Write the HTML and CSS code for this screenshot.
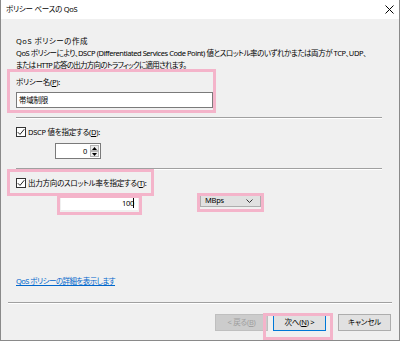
FILE: index.html
```html
<!DOCTYPE html>
<html lang="ja">
<head>
<meta charset="utf-8">
<link rel="stylesheet" href="styles.css">
</head>
<body>
<div class="window">
  <div class="titlebar">
    <span class="title">ポリシー ベースの QoS</span>
    <svg class="close" width="9" height="9" viewBox="0 0 9 9"><path d="M0.5 0.5L8.5 8.5M8.5 0.5L0.5 8.5" stroke="#000" stroke-width="1"/></svg>
  </div>
  <div class="body">
    <div class="heading">QoS ポリシーの作成</div>
    <div class="desc">
      <div class="desc-line">QoS ポリシーにより、DSCP (Differentiated Services Code Point) 値とスロットル率のいずれかまたは両方が TCP、UDP、</div>
      <div class="desc-line second">または HTTP 応答の出力方向のトラフィックに適用されます。</div>
    </div>
    <div class="label">ポリシー名(<u>P</u>):</div>
    <div class="textbox name">帯域制限</div>
    <div class="sep"></div>
    <div class="check-row">
      <span class="checkbox"><svg width="8" height="8" viewBox="0 0 8 8"><path d="M0.8 4.2L3 6.4L7.3 1.2" fill="none" stroke="#222" stroke-width="1"/></svg></span>
      <span>DSCP 値を指定する(<u>D</u>):</span>
    </div>
    <div class="spin">
      <div class="spin-field">0</div>
      <div class="spin-btns">
        <span class="spin-btn"><svg width="5" height="3" viewBox="0 0 5 3"><path d="M2.5 0L5 3H0Z" fill="#000"/></svg></span>
        <span class="spin-btn"><svg width="5" height="3" viewBox="0 0 5 3"><path d="M0 0H5L2.5 3Z" fill="#000"/></svg></span>
      </div>
    </div>
    <div class="sep"></div>
    <div class="check-row">
      <span class="checkbox"><svg width="8" height="8" viewBox="0 0 8 8"><path d="M0.8 4.2L3 6.4L7.3 1.2" fill="none" stroke="#222" stroke-width="1"/></svg></span>
      <span>出力方向のスロットル率を指定する(<u>T</u>):</span>
    </div>
    <div class="rate-row">
      <div class="textbox rate">100<span class="caret"></span></div>
      <div class="select"><span>MBps</span><svg width="7" height="4" viewBox="0 0 7 4"><path d="M0.5 0.5L3.5 3.5L6.5 0.5" fill="none" stroke="#333" stroke-width="1"/></svg></div>
    </div>
    <div class="link">QoS ポリシーの詳細を表示します</div>
  </div>
  <div class="footer-sep"></div>
  <div class="buttons">
    <div class="btn disabled">&lt; 戻る(<u>B</u>)</div>
    <div class="btn default">次へ(<u>N</u>) &gt;</div>
    <div class="btn cancel">キャンセル</div>
  </div>
  <div class="hl hl-name"></div>
  <div class="hl hl-check"></div>
  <div class="hl hl-rate"></div>
  <div class="hl hl-unit"></div>
  <div class="hl hl-next"></div>
</div>
</body>
</html>
```
FILE: styles.css
```css
html, body {
  margin: 0;
  padding: 0;
}
body {
  width: 400px;
  height: 341px;
  overflow: hidden;
  font-family: "Noto Sans", "Noto Sans CJK JP", sans-serif;
  font-size: 7.5px;
  letter-spacing: -0.25px;
  font-feature-settings: "palt";
  color: #000;
  background: #f0f0f0;
}
.window {
  position: relative;
  width: 400px;
  height: 341px;
  box-sizing: border-box;
  border: 1px solid #8a8a8a;
  border-top: none;
  background: #f0f0f0;
}
.titlebar {
  height: 19px;
  background: #fff;
  display: flex;
  align-items: center;
  justify-content: space-between;
  padding: 0 5px 0 5px;
}
.title {
  line-height: 19px;
}
.close {
  display: block;
}
.body {
  padding: 16px 0 0 15px;
}
.heading {
  line-height: 12px;
  height: 12px;
  letter-spacing: 0.5px;
}
.desc-line {
  line-height: 12px;
  white-space: nowrap;
  letter-spacing: -0.45px;
}
.desc-line.second {
  letter-spacing: -0.75px;
}
.label {
  margin-top: 5px;
  line-height: 12px;
}
.textbox {
  box-sizing: border-box;
  background: #fff;
  border: 1px solid #7a7a7a;
}
.name {
  margin-top: 4px;
  width: 197px;
  height: 16px;
  line-height: 14px;
  padding-left: 2px;
}
.sep {
  margin-top: 9px;
  width: 366px;
  height: 0;
  border-top: 1px solid #a0a0a0;
  border-bottom: 1px solid #fff;
}
.check-row {
  margin-top: 7px;
  display: flex;
  align-items: center;
  gap: 2px;
  line-height: 12px;
  height: 12px;
}
.checkbox {
  box-sizing: border-box;
  width: 10px;
  height: 10px;
  border: 1px solid #333;
  background: #fff;
  display: flex;
  align-items: center;
  justify-content: center;
}
.checkbox svg {
  display: block;
}
.spin {
  margin: 5px 0 0 39px;
  display: flex;
  height: 16px;
}
.spin-field {
  box-sizing: border-box;
  width: 35px;
  height: 16px;
  background: #fff;
  border: 1px solid #7a7a7a;
  border-right: none;
  text-align: right;
  padding-right: 3px;
  line-height: 14px;
}
.spin-btns {
  display: flex;
  flex-direction: column;
  background: #fff;
  border: 1px solid #7a7a7a;
  border-left: none;
  box-sizing: border-box;
  height: 16px;
  padding: 1px 1px 1px 0;
}
.spin-btn {
  box-sizing: border-box;
  width: 9px;
  height: 7px;
  background: #ececec;
  border: 1px solid #b5b5b5;
  display: flex;
  align-items: center;
  justify-content: center;
}
.spin-btn svg {
  display: block;
}
.rate-row {
  margin-top: 5px;
  display: flex;
  align-items: flex-start;
}
.rate {
  margin: 2px 0 0 45px;
  width: 77px;
  height: 14px;
  line-height: 12px;
  text-align: right;
  padding-right: 3px;
  border-color: #fff;
}
.caret {
  display: inline-block;
  width: 1px;
  height: 11px;
  background: #000;
  vertical-align: -2px;
  margin-left: -1px;
}
.select {
  box-sizing: border-box;
  margin-left: 62px;
  width: 61px;
  height: 13px;
  background: #e1e1e1;
  border: 1px solid #adadad;
  display: flex;
  align-items: center;
  justify-content: space-between;
  padding: 0 7px 0 4px;
  line-height: 11px;
}
.select svg {
  display: block;
}
.link {
  margin-top: 65px;
  line-height: 12px;
  color: #0066cc;
  text-decoration: underline;
  letter-spacing: -0.55px;
}
.footer-sep {
  margin: 15px 7px 0 7px;
  height: 0;
  border-top: 1px solid #a0a0a0;
  border-bottom: 1px solid #fff;
}
.buttons {
  margin-top: 10px;
  display: flex;
  justify-content: flex-end;
  padding-right: 8px;
}
.btn {
  box-sizing: border-box;
  width: 53px;
  height: 17px;
  background: #e1e1e1;
  border: 1px solid #adadad;
  text-align: center;
  line-height: 15px;
}
.btn.disabled {
  color: #a0a0a0;
  border-color: #bfbfbf;
  background: #cccccc;
}
.btn.default {
  margin-left: 5px;
  border-color: #0078d7;
}
.btn.cancel {
  margin-left: 12px;
}
.hl {
  position: absolute;
  box-sizing: border-box;
  border: 3px solid #f4b4ca;
}
.hl-name {
  left: 6px;
  top: 69px;
  width: 209px;
  height: 44px;
}
.hl-check {
  left: 6px;
  top: 169px;
  width: 147px;
  height: 27px;
}
.hl-rate {
  left: 56px;
  top: 195px;
  width: 85px;
  height: 20px;
}
.hl-unit {
  left: 196px;
  top: 193px;
  width: 67px;
  height: 19px;
}
.hl-next {
  left: 262px;
  top: 313px;
  width: 70px;
  height: 27px;
}
```
